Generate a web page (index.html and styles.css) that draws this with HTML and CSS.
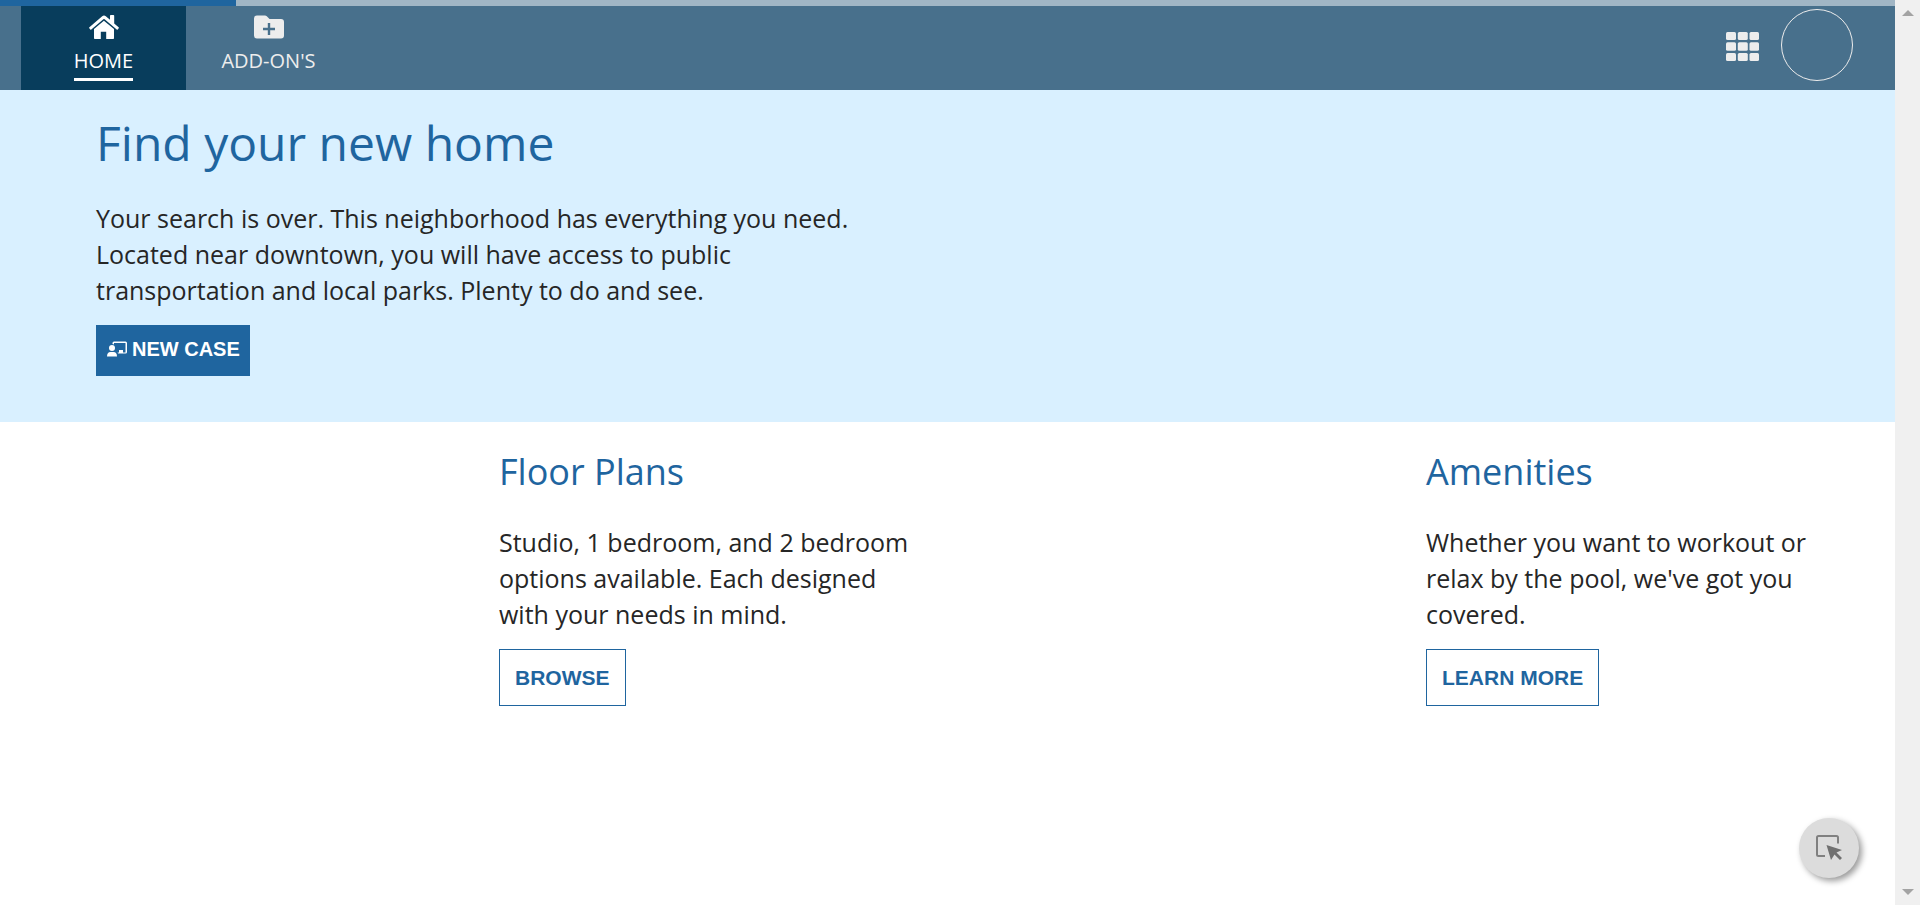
FILE: index.html
```html
<!DOCTYPE html>
<html lang="en">
<head>
<meta charset="utf-8">
<meta name="viewport" content="width=device-width, initial-scale=1">
<title>Find your new home</title>
<link rel="stylesheet" href="styles.css">
</head>
<body>
<div class="page">
  <div class="progress"><div class="progress-bar"></div></div>
  <header class="topbar">
    <nav class="tabs">
      <a class="tab tab-active" href="#home">
        <svg class="tab-icon" viewBox="0 0 30 24" aria-hidden="true"><path d="M14.9 5.8 5 14v9.2q0 .8.8.8h6v-7.200h5.400V24h7q.8 0 .8-.8V14Z"/><path d="M.4 12.200q-.5.500-.100 1l1 1.200q.500.500 1 .100L14.400 4.300q.600-.400 1.200 0l12.100 10.200q.500.400 1-.100l1-1.200q.400-.500-.100-1L25.200 8.400V.800q0-.800-.800-.800h-2.600q-.800 0-.800.800v4L16.800 1.200q-1.800-1.400-3.600 0Z"/></svg>
        <span class="tab-label">HOME</span>
      </a>
      <a class="tab" href="#addons">
        <svg class="tab-icon" viewBox="0 0 30 24" aria-hidden="true"><path fill-rule="evenodd" d="M3 .5h8q1 0 1.800.8L15.500 4H27q3 0 3 3v13.500q0 3-3 3H3q-3 0-3-3v-17q0-3 3-3ZM13.800 8v4.800H9v2.400h4.800V20h2.400v-4.800H21v-2.400h-4.800V8Z"/></svg>
        <span class="tab-label">ADD-ON'S</span>
      </a>
    </nav>
    <div class="actions">
      <button class="apps" type="button" aria-label="Applications">
        <svg class="apps-icon" viewBox="0 0 33 29" aria-hidden="true"><g><rect width="10" height="8" rx="1.500"/><rect x="11.800" width="10" height="8" rx="1.500"/><rect x="23.500" width="9.500" height="8" rx="1.500"/><rect y="10.300" width="10" height="8.500" rx="1.500"/><rect x="11.800" y="10.300" width="10" height="8.500" rx="1.500"/><rect x="23.500" y="10.300" width="9.500" height="8.500" rx="1.500"/><rect y="21" width="10" height="8" rx="1.500"/><rect x="11.800" y="21" width="10" height="8" rx="1.500"/><rect x="23.500" y="21" width="9.500" height="8" rx="1.500"/></g></svg>
      </button>
      <button class="avatar" type="button" aria-label="Account"></button>
    </div>
  </header>
  <main>
    <section class="hero">
      <h1 class="hero-title">Find your new home</h1>
      <p class="copy hero-copy">Your search is over. This neighborhood has everything you need. Located near downtown, you will have access to public transportation and local parks. Plenty to do and see.</p>
      <button class="button-primary" type="button">
        <svg class="case-icon" viewBox="0 0 20 16" aria-hidden="true"><path d="M5.500 3V2q0-1.500 1.500-1.500h11.500Q20 .5 20 2v9q0 1.500-1.500 1.500h-7.300l-.700-1H12V9h4v2.500h2.500V2H7v1.500Z"/><circle cx="5" cy="7" r="3"/><path d="M0 15.500q0-4.500 3.500-4.500h3q3.500 0 3.500 4.500Z"/></svg>
        <span>NEW CASE</span>
      </button>
    </section>
    <section class="cards">
      <article class="card">
        <h2 class="card-title">Floor Plans</h2>
        <p class="copy card-copy">Studio, 1 bedroom, and 2 bedroom options available. Each designed with your needs in mind.</p>
        <button class="button-outline" type="button">BROWSE</button>
      </article>
      <article class="card">
        <h2 class="card-title">Amenities</h2>
        <p class="copy card-copy">Whether you want to workout or relax by the pool, we've got you covered.</p>
        <button class="button-outline" type="button">LEARN MORE</button>
      </article>
    </section>
  </main>
  <button class="fab" type="button" aria-label="Select element">
    <svg class="fab-icon" viewBox="0 0 28 28" aria-hidden="true"><path class="fab-frame" d="M23 9.500V3.500Q23 2 21.500 2h-18Q2 2 2 3.500v17Q2 22 3.500 22H10"/><path d="m11.500 11 15.500 5-5.500 2.500 5.500 5.500-2 2-5.500-5.500L16 26Z"/></svg>
  </button>
</div>
<div class="scrollbar" aria-hidden="true">
  <svg class="scroll-arrow" viewBox="0 0 12 6"><path d="M6 0 12 6H0Z"/></svg>
  <svg class="scroll-arrow" viewBox="0 0 12 6"><path d="M0 0H12L6 6Z"/></svg>
</div>
</body>
</html>
```
FILE: styles.css
```css
* { box-sizing: border-box; }

body {
  margin: 0;
  display: flex;
  min-height: 100vh;
  background: #fff;
  color: #262626;
  font-family: "Open Sans", "Noto Sans", sans-serif;
}

button { margin: 0; cursor: pointer; }

.page { flex: 1; min-width: 0; }

.progress { height: 6px; background: #a1b6c5; }
.progress-bar { width: 236px; height: 100%; background: #1f659f; }

.topbar {
  display: flex;
  justify-content: space-between;
  padding: 0 42px 0 21px;
  background: #48708c;
}

.tabs { display: flex; }

.tab {
  display: flex;
  flex-direction: column;
  align-items: center;
  width: 165px;
  height: 84px;
  padding-top: 9px;
  color: #ededed;
  font-size: 20px;
  text-decoration: none;
}
.tab-active { background: #083d5c; color: #fff; }
.tab-icon { width: 30px; height: 24px; fill: currentColor; }
.tab-label {
  margin-top: 8px;
  padding-bottom: 3px;
  line-height: 28px;
  border-bottom: 3px solid transparent;
}
.tab-active .tab-label { border-color: currentColor; }

.actions { display: flex; align-items: center; gap: 22px; padding-bottom: 6px; }
.apps { display: flex; padding: 2px 0 0; border: 0; background: none; }
.apps-icon { width: 33px; height: 29px; fill: #ededed; }
.avatar {
  width: 72px;
  height: 72px;
  border: 1px solid #ededed;
  border-radius: 50%;
  background: none;
}

.hero { padding: 20px 96px 46px; background: #d9f0ff; }

.hero-title,
.card-title { margin: 0; color: #1f659f; font-weight: 400; }
.hero-title { font-size: 48px; line-height: 66px; }
.card-title { font-size: 36px; line-height: 48px; }

.copy { margin: 24px 0 17px; font-size: 25px; line-height: 36px; }
.hero-copy { max-width: 790px; }
.card-copy { max-width: 424px; margin-top: 28px; }

.button-primary,
.button-outline {
  font-family: "Liberation Sans", Arial, sans-serif;
  font-weight: 700;
}
.button-primary {
  display: flex;
  gap: 5px;
  height: 51px;
  padding: 12px 10px 12px 11px;
  border: 0;
  background: #1f659f;
  color: #fff;
  font-size: 20px;
  line-height: 24px;
}
.case-icon { width: 20px; height: 16px; margin-top: 4px; fill: currentColor; }

.cards {
  display: grid;
  grid-template-columns: 1fr 1fr;
  gap: 22px;
  padding: 26px 31px 26px 32px;
}
.card { padding-left: 467px; }
.button-outline {
  height: 57px;
  padding: 0 15px;
  border: 1px solid #1f659f;
  background: #fff;
  color: #1f659f;
  font-size: 21px;
}

.fab {
  position: fixed;
  right: 61px;
  bottom: 27px;
  display: grid;
  place-items: center;
  width: 60px;
  height: 60px;
  padding: 0;
  border: 0;
  border-radius: 50%;
  background: #dcdcdc;
  box-shadow: 3px 3px 6px rgba(0, 0, 0, .4);
}
.fab-icon { width: 28px; height: 28px; fill: #707070; }
.fab-frame { fill: none; stroke: #808080; stroke-width: 2; }

.scrollbar {
  display: flex;
  flex-direction: column;
  align-items: center;
  justify-content: space-between;
  width: 25px;
  padding: 10px 0;
  background: #f0f0f0;
}
.scroll-arrow { width: 12px; height: 6px; fill: #a3a3a3; }
```
